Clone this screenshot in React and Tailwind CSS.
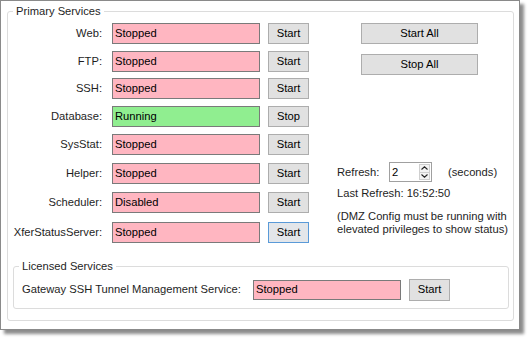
import React from "react";

const rows = [
  { label: "Web:", status: "Stopped", btn: "Start", mt: "" },
  { label: "FTP:", status: "Stopped", btn: "Start", mt: "mt-[7px]" },
  { label: "SSH:", status: "Stopped", btn: "Start", mt: "mt-[6px]" },
  { label: "Database:", status: "Running", btn: "Stop", mt: "mt-[7px]", ok: true },
  { label: "SysStat:", status: "Stopped", btn: "Start", mt: "mt-[7px]" },
  { label: "Helper:", status: "Stopped", btn: "Start", mt: "mt-[8px]" },
  { label: "Scheduler:", status: "Disabled", btn: "Start", mt: "mt-[8px]" },
  { label: "XferStatusServer:", status: "Stopped", btn: "Start", mt: "mt-[9px]", focus: true },
];

function Btn({ children, className = "", focus }) {
  return (
    <div
      className={
        "flex items-center justify-center border text-[11.2px] leading-none text-black " +
        (focus ? "border-[#5a9ad8] bg-[#e3e6ea] " : "border-[#adadad] bg-[#e1e1e1] ") +
        className
      }
    >
      {children}
    </div>
  );
}

function Status({ text, ok, className = "" }) {
  return (
    <div
      className={
        "flex items-center border border-[#7a7a7a] pl-[2px] text-[11.2px] leading-none text-black " +
        (ok ? "bg-[#90ee90] " : "bg-[#ffb6c1] ") +
        className
      }
    >
      {text}
    </div>
  );
}

export default function App() {
  return (
    <div
      className="w-[530px] h-[340px] bg-white"
      style={{ fontFamily: '"Liberation Sans", Arial, sans-serif' }}
    >
      <div className="w-[520px] h-[330px] border border-[#8a8a8a] bg-white shadow-[4px_4px_3px_rgba(0,0,0,0.45)] pt-[3px] pl-[6px]">
        <fieldset className="w-[507px] border border-[#dcdcdc] rounded-[3px] pb-[11px]">
          <legend className="ml-[5px] px-[3px] text-[11.2px] leading-[14px] text-[#1e1e1e]">
            Primary Services
          </legend>
          <div className="flex pt-[5px]">
            <div className="flex flex-col">
              {rows.map((r) => (
                <div key={r.label} className={"flex h-[21px] items-center " + r.mt}>
                  <div className="w-[94px] text-right text-[11.2px] leading-none text-[#1e1e1e]">
                    {r.label}
                  </div>
                  <Status text={r.status} ok={r.ok} className="ml-[10px] h-[21px] w-[148px]" />
                  <Btn focus={r.focus} className="ml-[8px] h-[21px] w-[41px]">
                    {r.btn}
                  </Btn>
                </div>
              ))}
            </div>
            <div className="ml-[28px] flex flex-col">
              <Btn className="ml-[24px] h-[21px] w-[117px]">Start All</Btn>
              <Btn className="ml-[24px] mt-[10px] h-[21px] w-[117px]">Stop All</Btn>
              <div className="mt-[87px] flex h-[20px] items-center text-[11.2px] text-[#1e1e1e]">
                <div className="w-[52px]">Refresh:</div>
                <div className="flex h-[20px] w-[43px] border border-[#a0a0a0] bg-white">
                  <div className="flex flex-1 items-center pl-[2px] text-[11.2px] text-black">2</div>
                  <div className="flex w-[11px] flex-col my-[1px] mr-[1px]">
                    <div className="flex flex-1 items-center justify-center border border-[#cfcfcf] bg-[#f3f3f3]">
                      <svg width="7" height="4" viewBox="0 0 7 4">
                        <path d="M0.5 3.5 L3.5 0.8 L6.5 3.5" fill="none" stroke="#222" strokeWidth="1.1" />
                      </svg>
                    </div>
                    <div className="flex flex-1 items-center justify-center border border-t-0 border-[#cfcfcf] bg-[#f3f3f3]">
                      <svg width="7" height="4" viewBox="0 0 7 4">
                        <path d="M0.5 0.5 L3.5 3.2 L6.5 0.5" fill="none" stroke="#222" strokeWidth="1.1" />
                      </svg>
                    </div>
                  </div>
                </div>
                <div className="ml-[16px]">(seconds)</div>
              </div>
              <div className="mt-[4px] text-[11.2px] leading-[14px] text-[#1e1e1e]">
                Last Refresh: 16:52:50
              </div>
              <div className="mt-[10px] text-[11.2px] leading-[13px] text-[#1e1e1e]">
                <div>(DMZ Config must be running with</div>
                <div>elevated privileges to show status)</div>
              </div>
            </div>
          </div>
          <fieldset className="ml-[5px] mt-[16px] w-[496px] border border-[#dcdcdc] rounded-[3px] pb-[7px]">
            <legend className="ml-[5px] px-[3px] text-[11.2px] leading-[14px] text-[#1e1e1e]">
              Licensed Services
            </legend>
            <div className="flex h-[22px] items-center mt-[6px] pl-[8px]">
              <div className="w-[231px] text-[11.2px] leading-none text-[#1e1e1e]">
                Gateway SSH Tunnel Management Service:
              </div>
              <Status text="Stopped" className="h-[20px] w-[148px]" />
              <Btn className="ml-[8px] h-[22px] w-[41px]">Start</Btn>
            </div>
          </fieldset>
        </fieldset>
      </div>
    </div>
  );
}
